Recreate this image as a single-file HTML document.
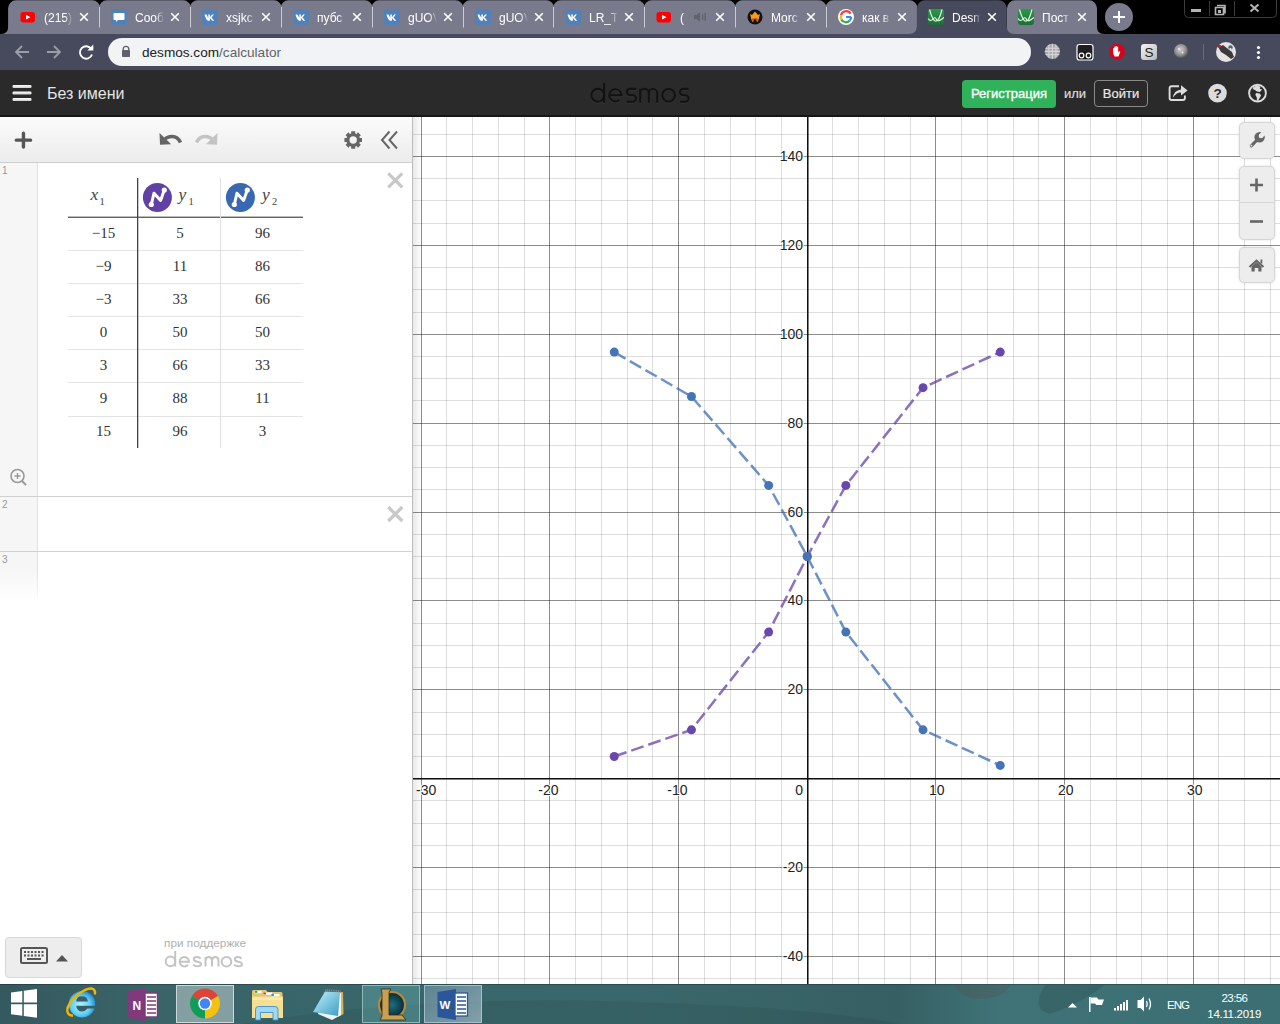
<!DOCTYPE html>
<html><head><meta charset="utf-8">
<style>
*{box-sizing:border-box;margin:0;padding:0}
html,body{width:1280px;height:1024px;overflow:hidden;background:#000;font-family:"Liberation Sans",sans-serif}
.abs{position:absolute}
/* tabs */
#tabbar{position:absolute;left:0;top:0;width:1280px;height:34px;background:#000}
.tab{position:absolute;top:0;height:34px;background:#797b8c;border-radius:8px 8px 0 0}
.tab.active{background:#474a5c}
.tab .fav{position:absolute;left:12px;top:9px;width:16px;height:16px}
.tab .ttl{position:absolute;left:36px;top:9px;font-size:14px;color:#fff;white-space:nowrap;overflow:hidden;width:36px;height:18px;line-height:16px}
.tab .x{position:absolute;left:77px;top:10px;width:14px;height:14px}
.sep{position:absolute;top:10px;width:1px;height:17px;background:#b0b2bf}
/* toolbar */
#toolbar{position:absolute;left:0;top:34px;width:1280px;height:36px;background:#474a5c}
#omni{position:absolute;left:108px;top:4px;width:923px;height:28px;border-radius:14px;background:#f1f3f4}
#omni .url{position:absolute;left:34px;top:7px;font-size:13.6px;color:#202124;letter-spacing:0px}
#omni .url span{color:#5f6368}
/* desmos header */
#dhead{position:absolute;left:0;top:70px;width:1280px;height:47px;background:#2a2a2a;border-bottom:2px solid #161616}
#dhead .title{position:absolute;left:47px;top:15px;font-size:16px;color:#e4e4e4}
.btn-green{position:absolute;left:962px;top:10px;width:94px;height:28px;background:#2fb25a;border-radius:4px;color:#fff;font-size:13px;-webkit-text-stroke:0.35px #fff;text-align:center;line-height:28px}
.ili{position:absolute;left:1064px;top:16px;font-size:13px;color:#ddd;-webkit-text-stroke:0.2px #ddd}
.btn-out{position:absolute;left:1094px;top:10px;width:54px;height:27px;border:1px solid #8a8a8a;border-radius:4px;color:#e8e8e8;font-size:13px;-webkit-text-stroke:0.2px #e8e8e8;text-align:center;line-height:26px}
/* left panel */
#panel{position:absolute;left:0;top:117px;width:413px;height:867px;background:#fff;border-right:1px solid #bdbdbd}
#ptool{position:absolute;left:0;top:0;width:412px;height:46px;background:linear-gradient(#fbfbfb,#ececec);border-bottom:1px solid #cfcfcf}
.gutter{position:absolute;left:0;width:38px;background:#f6f6f6;border-right:1px solid #e2e2e2}
.rownum{position:absolute;left:2px;font-size:10px;color:#999}
.rowline{position:absolute;left:0;width:412px;height:1px;background:#d0d0d0}
#tbl{position:absolute;left:68px;top:61px}
.cell{position:absolute;text-align:center;font-family:"Liberation Serif",serif;font-size:15px;color:#333}
/* graph */
.graph{position:absolute;left:413px;top:117px;background:#fff}
.lab text{font-family:"Liberation Sans",sans-serif;font-size:14px;fill:#222;stroke:#fff;stroke-width:2px;paint-order:stroke;stroke-linejoin:round}
#shadow{position:absolute;left:413px;top:117px;width:9px;height:867px;background:linear-gradient(to right,rgba(0,0,0,0.09),rgba(0,0,0,0))}
.gbtn{position:absolute;left:1238.5px;width:36px;background:#ededed;border:1px solid #d6d6d6;border-radius:5px;box-shadow:0 0 3px rgba(0,0,0,0.12)}
/* taskbar */
#taskbar{position:absolute;left:0;top:984px;width:1280px;height:40px;background:linear-gradient(100deg,#2b4e55 0%,#2f5a5f 30%,#3a6b70 55%,#3d7076 80%,#3b6c72 100%)}
.hl{position:absolute;top:1px;height:38px;border:1px solid rgba(255,255,255,0.55);background:rgba(255,255,255,0.25)}
.tray{position:absolute;color:#fff;font-size:12px}
</style></head><body>

<div id="tabbar"><svg width="1280" height="34" style="position:absolute;left:0;top:0">
<defs><linearGradient id="fade" x1="0" x2="1"><stop offset="0.72" stop-color="#fff" stop-opacity="1"/><stop offset="1" stop-color="#fff" stop-opacity="0"/></linearGradient><mask id="fm"><rect x="0" y="0" width="29" height="34" fill="url(#fade)"/></mask></defs>
<path d="M1.1000000000000014,34 Q8.100000000000001,34 8.100000000000001,27 L8.100000000000001,8.3 A8,8 0 0 1 16.1,0.3 L92.3,0.3 A8,8 0 0 1 100.3,8.3 L100.3,34 Z" fill="#797b8c"/>
<path d="M98.89999999999999,34 L98.89999999999999,8.3 A8,8 0 0 1 106.89999999999999,0.3 L183.1,0.3 A8,8 0 0 1 191.1,8.3 L191.1,34 Z" fill="#797b8c"/>
<path d="M189.70000000000002,34 L189.70000000000002,8.3 A8,8 0 0 1 197.70000000000002,0.3 L273.9,0.3 A8,8 0 0 1 281.9,8.3 L281.9,34 Z" fill="#797b8c"/>
<path d="M280.5,34 L280.5,8.3 A8,8 0 0 1 288.5,0.3 L364.7,0.3 A8,8 0 0 1 372.7,8.3 L372.7,34 Z" fill="#797b8c"/>
<path d="M371.3,34 L371.3,8.3 A8,8 0 0 1 379.3,0.3 L455.5,0.3 A8,8 0 0 1 463.5,8.3 L463.5,34 Z" fill="#797b8c"/>
<path d="M462.1,34 L462.1,8.3 A8,8 0 0 1 470.1,0.3 L546.3,0.3 A8,8 0 0 1 554.3,8.3 L554.3,34 Z" fill="#797b8c"/>
<path d="M552.8999999999999,34 L552.8999999999999,8.3 A8,8 0 0 1 560.8999999999999,0.3 L637.0999999999999,0.3 A8,8 0 0 1 645.0999999999999,8.3 L645.0999999999999,34 Z" fill="#797b8c"/>
<path d="M643.6999999999999,34 L643.6999999999999,8.3 A8,8 0 0 1 651.6999999999999,0.3 L727.9,0.3 A8,8 0 0 1 735.9,8.3 L735.9,34 Z" fill="#797b8c"/>
<path d="M734.4999999999999,34 L734.4999999999999,8.3 A8,8 0 0 1 742.4999999999999,0.3 L818.6999999999999,0.3 A8,8 0 0 1 826.6999999999999,8.3 L826.6999999999999,34 Z" fill="#797b8c"/>
<path d="M825.2999999999998,34 L825.2999999999998,8.3 A8,8 0 0 1 833.2999999999998,0.3 L909.4999999999999,0.3 A8,8 0 0 1 917.4999999999999,8.3 L917.4999999999999,34 Z" fill="#797b8c"/>
<path d="M1007.0,34 L1007.0,8.3 A8,8 0 0 1 1015.0,0.3 L1089,0.3 A8,8 0 0 1 1097,8.3 L1097,27 Q1097,34 1104,34 Z" fill="#797b8c"/>
<path d="M908.8,34 Q916.8,34 916.8,26 L916.8,8.3 A8,8 0 0 1 924.8,0.3 L998.8,0.3 A8,8 0 0 1 1006.8,8.3 L1006.8,26 Q1006.8,34 1014.8,34 Z" fill="#474a5c"/>
<rect x="99" y="7" width="1" height="20.5" fill="#c9cad3"/>
<rect x="190" y="7" width="1" height="20.5" fill="#c9cad3"/>
<rect x="281" y="7" width="1" height="20.5" fill="#c9cad3"/>
<rect x="372" y="7" width="1" height="20.5" fill="#c9cad3"/>
<rect x="463" y="7" width="1" height="20.5" fill="#c9cad3"/>
<rect x="553" y="7" width="1" height="20.5" fill="#c9cad3"/>
<rect x="644" y="7" width="1" height="20.5" fill="#c9cad3"/>
<rect x="735" y="7" width="1" height="20.5" fill="#c9cad3"/>
<rect x="826" y="7" width="1" height="20.5" fill="#c9cad3"/>
<g><rect x="20.5" y="12" width="14.5" height="10.5" rx="3" fill="#ff0000"/><path d="M26,14.8 L30.5,17.2 L26,19.6 Z" fill="#fff"/></g>
<svg x="44" y="0" width="29" height="34" overflow="hidden"><g mask="url(#fm)"><text x="0" y="21.5" font-family="Liberation Sans" font-size="12" fill="#fff">(215)</text></g></svg>
<path d="M80.2,13.2 L87.8,20.8 M87.8,13.2 L80.2,20.8" stroke="#fff" stroke-width="1.6"/>
<g><rect x="111" y="9" width="16" height="16" rx="3" fill="#5181b8"/><path d="M114.5,13 h9 q1,0 1,1 v5 q0,1 -1,1 h-5.5 l-2,2 v-2 h-1.5 q-1,0 -1,-1 v-5 q0,-1 1,-1 Z" fill="#fff"/></g>
<svg x="135" y="0" width="29" height="34" overflow="hidden"><g mask="url(#fm)"><text x="0" y="21.5" font-family="Liberation Sans" font-size="12" fill="#fff">Сооб</text></g></svg>
<path d="M171.2,13.2 L178.8,20.8 M178.8,13.2 L171.2,20.8" stroke="#fff" stroke-width="1.6"/>
<g><rect x="202" y="9" width="16" height="16" rx="3" fill="#5181b8"/><path d="M204.5,14.5 h2 l1.8,3.6 v-3.6 h1.6 v2.8 l2.2,-2.8 h1.8 l-2.4,3 2.8,3.2 h-2 l-2.4,-2.6 v2.6 h-1.6 Q206,20.5 204.5,14.5 Z" fill="#fff"/></g>
<svg x="226" y="0" width="29" height="34" overflow="hidden"><g mask="url(#fm)"><text x="0" y="21.5" font-family="Liberation Sans" font-size="12" fill="#fff">xsjkc</text></g></svg>
<path d="M262.2,13.2 L269.8,20.8 M269.8,13.2 L262.2,20.8" stroke="#fff" stroke-width="1.6"/>
<g><rect x="293" y="9" width="16" height="16" rx="3" fill="#5181b8"/><path d="M295.5,14.5 h2 l1.8,3.6 v-3.6 h1.6 v2.8 l2.2,-2.8 h1.8 l-2.4,3 2.8,3.2 h-2 l-2.4,-2.6 v2.6 h-1.6 Q297,20.5 295.5,14.5 Z" fill="#fff"/></g>
<svg x="317" y="0" width="29" height="34" overflow="hidden"><g mask="url(#fm)"><text x="0" y="21.5" font-family="Liberation Sans" font-size="12" fill="#fff">пубс</text></g></svg>
<path d="M353.2,13.2 L360.8,20.8 M360.8,13.2 L353.2,20.8" stroke="#fff" stroke-width="1.6"/>
<g><rect x="384" y="9" width="16" height="16" rx="3" fill="#5181b8"/><path d="M386.5,14.5 h2 l1.8,3.6 v-3.6 h1.6 v2.8 l2.2,-2.8 h1.8 l-2.4,3 2.8,3.2 h-2 l-2.4,-2.6 v2.6 h-1.6 Q388,20.5 386.5,14.5 Z" fill="#fff"/></g>
<svg x="408" y="0" width="29" height="34" overflow="hidden"><g mask="url(#fm)"><text x="0" y="21.5" font-family="Liberation Sans" font-size="12" fill="#fff">gUOV</text></g></svg>
<path d="M444.2,13.2 L451.8,20.8 M451.8,13.2 L444.2,20.8" stroke="#fff" stroke-width="1.6"/>
<g><rect x="475" y="9" width="16" height="16" rx="3" fill="#5181b8"/><path d="M477.5,14.5 h2 l1.8,3.6 v-3.6 h1.6 v2.8 l2.2,-2.8 h1.8 l-2.4,3 2.8,3.2 h-2 l-2.4,-2.6 v2.6 h-1.6 Q479,20.5 477.5,14.5 Z" fill="#fff"/></g>
<svg x="499" y="0" width="29" height="34" overflow="hidden"><g mask="url(#fm)"><text x="0" y="21.5" font-family="Liberation Sans" font-size="12" fill="#fff">gUOV</text></g></svg>
<path d="M535.2,13.2 L542.8,20.8 M542.8,13.2 L535.2,20.8" stroke="#fff" stroke-width="1.6"/>
<g><rect x="565" y="9" width="16" height="16" rx="3" fill="#5181b8"/><path d="M567.5,14.5 h2 l1.8,3.6 v-3.6 h1.6 v2.8 l2.2,-2.8 h1.8 l-2.4,3 2.8,3.2 h-2 l-2.4,-2.6 v2.6 h-1.6 Q569,20.5 567.5,14.5 Z" fill="#fff"/></g>
<svg x="589" y="0" width="29" height="34" overflow="hidden"><g mask="url(#fm)"><text x="0" y="21.5" font-family="Liberation Sans" font-size="12" fill="#fff">LR_T3</text></g></svg>
<path d="M625.2,13.2 L632.8,20.8 M632.8,13.2 L625.2,20.8" stroke="#fff" stroke-width="1.6"/>
<g><rect x="656.5" y="12" width="14.5" height="10.5" rx="3" fill="#ff0000"/><path d="M662,14.8 L666.5,17.2 L662,19.6 Z" fill="#fff"/></g>
<svg x="680" y="0" width="29" height="34" overflow="hidden"><g mask="url(#fm)"><text x="0" y="21.5" font-family="Liberation Sans" font-size="12" fill="#fff">(</text></g></svg>
<path d="M716.2,13.2 L723.8,20.8 M723.8,13.2 L716.2,20.8" stroke="#fff" stroke-width="1.6"/>
<g><circle cx="755" cy="17" r="7.5" fill="#111"/><path d="M755,11.5 L758,15 L760,14 L758.5,20 L757,22.5 L756,18 L755,20 L754,18 L753,22.5 L751.5,20 L750,14 L752,15 Z" fill="#f59b1a"/><path d="M752,19 L753,22.5 L754,18 Z M758,19 L757,22.5 L756,18 Z" fill="#e0401a"/></g>
<svg x="771" y="0" width="29" height="34" overflow="hidden"><g mask="url(#fm)"><text x="0" y="21.5" font-family="Liberation Sans" font-size="12" fill="#fff">Morc</text></g></svg>
<path d="M807.2,13.2 L814.8,20.8 M814.8,13.2 L807.2,20.8" stroke="#fff" stroke-width="1.6"/>
<g><circle cx="846" cy="17" r="8" fill="#fff"/><path d="M850.6,13.8 A5.2,5.2 0 0 0 841,15.4" stroke="#ea4335" stroke-width="2.2" fill="none"/><path d="M841,15.4 A5.2,5.2 0 0 0 841.4,19.6" stroke="#fbbc05" stroke-width="2.2" fill="none"/><path d="M841.4,19.6 A5.2,5.2 0 0 0 849.8,20.6" stroke="#34a853" stroke-width="2.2" fill="none"/><path d="M849.8,20.6 A5.2,5.2 0 0 0 851.2,17" stroke="#4285f4" stroke-width="2.2" fill="none"/><rect x="846" y="16" width="5.2" height="2.1" fill="#4285f4"/></g>
<svg x="862" y="0" width="29" height="34" overflow="hidden"><g mask="url(#fm)"><text x="0" y="21.5" font-family="Liberation Sans" font-size="12" fill="#fff">как в</text></g></svg>
<path d="M898.2,13.2 L905.8,20.8 M905.8,13.2 L898.2,20.8" stroke="#fff" stroke-width="1.6"/>
<g><defs><linearGradient id="dg928" x1="0" y1="0" x2="0" y2="1"><stop offset="0" stop-color="#2a9a4a"/><stop offset="1" stop-color="#1d6f34"/></linearGradient></defs><rect x="928" y="9" width="16" height="16" rx="3" fill="url(#dg928)"/><g transform="translate(928,9)" fill="none" stroke="#e8f5ea" stroke-width="1.15"><path d="M1.5,0.5 Q8,24 14,0.5"/><path d="M0.2,9.6 C1.5,12.2 3.5,11.8 5,10 C6.5,8 7.5,8.5 8.8,11 C10,12.8 13,11 15.8,8.5"/></g></g>
<svg x="952" y="0" width="29" height="34" overflow="hidden"><g mask="url(#fm)"><text x="0" y="21.5" font-family="Liberation Sans" font-size="12" fill="#fff">Desm</text></g></svg>
<path d="M988.2,13.2 L995.8,20.8 M995.8,13.2 L988.2,20.8" stroke="#fff" stroke-width="1.6"/>
<g><defs><linearGradient id="dg1018" x1="0" y1="0" x2="0" y2="1"><stop offset="0" stop-color="#2a9a4a"/><stop offset="1" stop-color="#1d6f34"/></linearGradient></defs><rect x="1018" y="9" width="16" height="16" rx="3" fill="url(#dg1018)"/><g transform="translate(1018,9)" fill="none" stroke="#e8f5ea" stroke-width="1.15"><path d="M1.5,0.5 Q8,24 14,0.5"/><path d="M0.2,9.6 C1.5,12.2 3.5,11.8 5,10 C6.5,8 7.5,8.5 8.8,11 C10,12.8 13,11 15.8,8.5"/></g></g>
<svg x="1042" y="0" width="29" height="34" overflow="hidden"><g mask="url(#fm)"><text x="0" y="21.5" font-family="Liberation Sans" font-size="12" fill="#fff">Пост</text></g></svg>
<path d="M1078.2,13.2 L1085.8,20.8 M1085.8,13.2 L1078.2,20.8" stroke="#fff" stroke-width="1.6"/>
<path d="M694,15 h2.5 l3.5,-3 v10 l-3.5,-3 h-2.5 Z" fill="#60636e"/>
<rect x="702" y="14" width="1.3" height="6" fill="#60636e"/><rect x="704.5" y="13" width="1.3" height="8" fill="#60636e"/>
<circle cx="1119" cy="17" r="14" fill="#797b8c"/><path d="M1113,17 h12 M1119,11 v12" stroke="#fff" stroke-width="2"/>
<path d="M1184.5,0 V13.5 Q1184.5,17.5 1188.5,17.5 H1272.5 Q1276.5,17.5 1276.5,13.5 V0" fill="none" stroke="#3c3c3c" stroke-width="1"/>
<rect x="1209" y="1" width="1" height="15" fill="#3c3c3c"/><rect x="1234" y="1" width="1" height="15" fill="#3c3c3c"/>
<rect x="1191" y="9" width="10" height="3" fill="#b4b4b4"/>
<path d="M1217,5.5 h8 v8 M1215.5,7.5 h8 v7 h-8 Z" fill="none" stroke="#b4b4b4" stroke-width="1.6"/><rect x="1218" y="10" width="3" height="3" fill="#b4b4b4"/>
<path d="M1250.5,4.5 L1258.5,11.5 M1258.5,4.5 L1250.5,11.5" stroke="#b4b4b4" stroke-width="2"/>
</svg>
</div>

<div id="toolbar">
  <svg width="1280" height="36" style="position:absolute;left:0;top:0">
    <!-- back -->
    <path d="M29,18 H16.5 M22,12 L16,18 L22,24" stroke="#9b9da9" stroke-width="1.8" fill="none"/>
    <!-- forward -->
    <path d="M47,18 H59.5 M54,12 L60,18 L54,24" stroke="#9b9da9" stroke-width="1.8" fill="none"/>
    <!-- reload -->
    <path d="M91.3,15 A6.2,6.2 0 1 0 92,20.5" stroke="#fff" stroke-width="1.9" fill="none"/>
    <path d="M93.3,10.5 V16.5 H87.3 Z" fill="#fff"/>
    <!-- star -->
    <path d="M1013,12.5 L1014.9,16.8 L1019.5,17.2 L1016,20.2 L1017.1,24.7 L1013,22.3 L1008.9,24.7 L1010,20.2 L1006.5,17.2 L1011.1,16.8 Z" fill="none" stroke="#5f6368" stroke-width="1.5" stroke-linejoin="round"/>
    <!-- globe ext -->
    <defs><clipPath id="gclip"><circle cx="1052.4" cy="17.4" r="7.6"/></clipPath></defs>
    <circle cx="1052.4" cy="17.4" r="7.6" fill="#a9a9ad"/>
    <g clip-path="url(#gclip)"><path d="M1048.9,9 V26 M1052.4,9 V26 M1055.9,9 V26 M1044,14.2 H1061 M1044,17.4 H1061 M1044,20.6 H1061" stroke="#d6d6d8" stroke-width="1.1"/></g>
    <!-- oo ext -->
    <rect x="1077" y="10.5" width="16" height="15.5" rx="2.5" fill="#1e1e1e" stroke="#fff" stroke-width="1.2"/>
    <circle cx="1081.5" cy="21.5" r="2.3" fill="none" stroke="#fff" stroke-width="1.2"/>
    <circle cx="1088.5" cy="21.5" r="2.3" fill="none" stroke="#fff" stroke-width="1.2"/>
    <!-- adblock -->
    <path d="M1114,10 h6 l4.5,4.5 v6.5 l-4.5,4.5 h-6 l-4.5,-4.5 v-6.5 Z" fill="#d9001b"/>
    <path d="M1114.5,22.5 Q1113,20 1113,17.5 V14.5 q0.8,-0.8 1.3,0 V17 V12.8 q0.8,-0.8 1.3,0 V17 V12.3 q0.8,-0.8 1.3,0 V17 V13 q0.8,-0.8 1.3,0 V18.5 l1.2,-1.3 q0.9,-0.3 0.9,0.6 L1118.5,22.5 Z" fill="#fff"/>
    <!-- S ext -->
    <defs><linearGradient id="sg" x1="0" x2="1" y1="0" y2="1"><stop offset="0" stop-color="#f4f4f4"/><stop offset="1" stop-color="#b8b8b8"/></linearGradient></defs>
    <rect x="1141" y="10" width="16" height="16" rx="3" fill="url(#sg)"/>
    <text x="1149" y="23" text-anchor="middle" font-family="Liberation Sans" font-size="13.5" fill="#222">S</text>
    <!-- disc -->
    <defs><radialGradient id="dsc" cx="0.45" cy="0.4" r="0.6"><stop offset="0" stop-color="#d0d0d0"/><stop offset="0.7" stop-color="#8a8a8a"/><stop offset="1" stop-color="#555"/></radialGradient></defs>
    <circle cx="1181" cy="17" r="7" fill="url(#dsc)"/>
    <circle cx="1179" cy="15" r="1" fill="#eee"/><circle cx="1182.5" cy="18.5" r="0.9" fill="#eee"/>
    <rect x="1203" y="10" width="1" height="16" fill="#6a6d7e"/>
    <!-- avatar -->
    <circle cx="1226" cy="18" r="10" fill="#e6e4e2"/>
    <path d="M1218.5,13.5 L1223,11 L1228,15 L1232,18 L1234,23 L1231,25 L1226,21 L1221,18 Z" fill="#3c3a3a"/>
    <circle cx="1219.5" cy="12.5" r="1.8" fill="#b3202a"/>
    <circle cx="1230.5" cy="13.5" r="2.2" fill="#3e6c78"/><circle cx="1230.5" cy="15" r="1" fill="#fff"/>
    <!-- menu -->
    <circle cx="1258.5" cy="13.5" r="1.6" fill="#fff"/><circle cx="1258.5" cy="18.5" r="1.6" fill="#fff"/><circle cx="1258.5" cy="23.5" r="1.6" fill="#fff"/>
  </svg>
  <div id="omni">
    <svg width="30" height="28" style="position:absolute;left:0;top:0"><path d="M15.2,12.5 V11.2 A2.8,2.8 0 0 1 20.8,11.2 V12.5" stroke="#5f6368" stroke-width="1.4" fill="none"/><rect x="14" y="12" width="8" height="7" rx="0.8" fill="#5f6368"/></svg>
    <div class="url">desmos.com<span>/calculator</span></div>
  </div>
</div>

<div id="dhead">
  <svg width="1280" height="47" style="position:absolute;left:0;top:0">
    <defs><linearGradient id="hb" x1="0" x2="0" y1="0" y2="1"><stop offset="0" stop-color="#fff"/><stop offset="1" stop-color="#cfcfcf"/></linearGradient></defs>
    <rect x="12.5" y="15" width="19" height="3" rx="1.2" fill="url(#hb)"/>
    <rect x="12.5" y="21.5" width="19" height="3" rx="1.2" fill="url(#hb)"/>
    <rect x="12.5" y="28" width="19" height="3" rx="1.2" fill="url(#hb)"/>
    <!-- desmos logo -->
    <g fill="none" stroke="#363636" stroke-width="2.1" transform="translate(0,0.8)">
      <path d="M604.1,12.9 V32.8"/><circle cx="597.8" cy="25.3" r="6.45"/>
      <path d="M609.25,25.3 H621.45 A6.1,6.1 0 1 0 619.3,30.0"/>
      <path d="M635.9,18.85 H630.1 A3.225,3.225 0 0 0 630.1,25.3 H632.7 A3.225,3.225 0 0 1 632.7,31.75 H626.9"/>
      <path d="M640.2,32.8 V18.85 M640.2,23.15 A4.3,4.3 0 0 1 648.8,23.15 V32.8 M648.8,23.15 A4.2,4.2 0 0 1 657.2,23.15 V32.8"/>
      <circle cx="668.6" cy="25.3" r="6.35"/>
      <path d="M688.55,18.85 H683.2 A3.225,3.225 0 0 0 683.2,25.3 H685.3 A3.225,3.225 0 0 1 685.3,31.75 H680.05"/>
    </g>
    <g fill="none" stroke="#121212" stroke-width="2.1">
      <path d="M604.1,12.9 V32.8"/><circle cx="597.8" cy="25.3" r="6.45"/>
      <path d="M609.25,25.3 H621.45 A6.1,6.1 0 1 0 619.3,30.0"/>
      <path d="M635.9,18.85 H630.1 A3.225,3.225 0 0 0 630.1,25.3 H632.7 A3.225,3.225 0 0 1 632.7,31.75 H626.9"/>
      <path d="M640.2,32.8 V18.85 M640.2,23.15 A4.3,4.3 0 0 1 648.8,23.15 V32.8 M648.8,23.15 A4.2,4.2 0 0 1 657.2,23.15 V32.8"/>
      <circle cx="668.6" cy="25.3" r="6.35"/>
      <path d="M688.55,18.85 H683.2 A3.225,3.225 0 0 0 683.2,25.3 H685.3 A3.225,3.225 0 0 1 685.3,31.75 H680.05"/>
    </g>
    <!-- share -->
    <path d="M1179,16.2 H1171.6 Q1169.6,16.2 1169.6,18.2 V28 Q1169.6,30 1171.6,30 H1182.9 Q1184.9,30 1184.9,28 V25.5" stroke="#dcdcdc" stroke-width="1.9" fill="none"/>
    <path d="M1173,27.8 Q1173.5,20.5 1181,19.5 V15.3 L1187.6,20.6 L1181,25.6 V22.6 Q1176,22.6 1173,27.8 Z" fill="#dcdcdc"/>
    <!-- help -->
    <circle cx="1217.5" cy="23.1" r="9.3" fill="#dcdcdc"/>
    <text x="1217.5" y="28.2" text-anchor="middle" font-family="Liberation Sans" font-weight="bold" font-size="13.5" fill="#2a2a2a">?</text>
    <!-- globe -->
    <circle cx="1257.5" cy="23.1" r="8.4" fill="none" stroke="#dcdcdc" stroke-width="1.9"/>
    <path d="M1253.5,16.8 L1257.5,15.5 L1260.5,16.8 L1259.8,18.7 L1262.1,19.5 L1259.9,21.9 L1256.9,21.5 L1254.9,19.9 L1252.7,18.9 Z M1256.1,23.1 L1259.7,23.5 L1261.1,25.5 L1259.7,27.9 L1258.1,30.7 L1257.1,31.3 L1256.7,27.3 L1255.3,24.7 Z" fill="#dcdcdc"/>
  </svg>
  <div class="title">Без имени</div>
  <div class="btn-green">Регистрация</div>
  <div class="ili">или</div>
  <div class="btn-out">Войти</div>
</div>

<svg class="graph" width="867" height="867" viewBox="0 0 867 867">
<g shape-rendering="crispEdges"><rect x="33" y="0" width="1" height="867" fill="rgba(0,0,0,0.13)"/>
<rect x="59" y="0" width="1" height="867" fill="rgba(0,0,0,0.13)"/>
<rect x="85" y="0" width="1" height="867" fill="rgba(0,0,0,0.13)"/>
<rect x="111" y="0" width="1" height="867" fill="rgba(0,0,0,0.13)"/>
<rect x="162" y="0" width="1" height="867" fill="rgba(0,0,0,0.13)"/>
<rect x="188" y="0" width="1" height="867" fill="rgba(0,0,0,0.13)"/>
<rect x="214" y="0" width="1" height="867" fill="rgba(0,0,0,0.13)"/>
<rect x="239" y="0" width="1" height="867" fill="rgba(0,0,0,0.13)"/>
<rect x="291" y="0" width="1" height="867" fill="rgba(0,0,0,0.13)"/>
<rect x="317" y="0" width="1" height="867" fill="rgba(0,0,0,0.13)"/>
<rect x="342" y="0" width="1" height="867" fill="rgba(0,0,0,0.13)"/>
<rect x="368" y="0" width="1" height="867" fill="rgba(0,0,0,0.13)"/>
<rect x="419" y="0" width="1" height="867" fill="rgba(0,0,0,0.13)"/>
<rect x="445" y="0" width="1" height="867" fill="rgba(0,0,0,0.13)"/>
<rect x="471" y="0" width="1" height="867" fill="rgba(0,0,0,0.13)"/>
<rect x="497" y="0" width="1" height="867" fill="rgba(0,0,0,0.13)"/>
<rect x="548" y="0" width="1" height="867" fill="rgba(0,0,0,0.13)"/>
<rect x="574" y="0" width="1" height="867" fill="rgba(0,0,0,0.13)"/>
<rect x="600" y="0" width="1" height="867" fill="rgba(0,0,0,0.13)"/>
<rect x="625" y="0" width="1" height="867" fill="rgba(0,0,0,0.13)"/>
<rect x="677" y="0" width="1" height="867" fill="rgba(0,0,0,0.13)"/>
<rect x="703" y="0" width="1" height="867" fill="rgba(0,0,0,0.13)"/>
<rect x="728" y="0" width="1" height="867" fill="rgba(0,0,0,0.13)"/>
<rect x="754" y="0" width="1" height="867" fill="rgba(0,0,0,0.13)"/>
<rect x="805" y="0" width="1" height="867" fill="rgba(0,0,0,0.13)"/>
<rect x="831" y="0" width="1" height="867" fill="rgba(0,0,0,0.13)"/>
<rect x="857" y="0" width="1" height="867" fill="rgba(0,0,0,0.13)"/>
<rect x="0" y="861" width="867" height="1" fill="rgba(0,0,0,0.13)"/>
<rect x="0" y="817" width="867" height="1" fill="rgba(0,0,0,0.13)"/>
<rect x="0" y="795" width="867" height="1" fill="rgba(0,0,0,0.13)"/>
<rect x="0" y="772" width="867" height="1" fill="rgba(0,0,0,0.13)"/>
<rect x="0" y="728" width="867" height="1" fill="rgba(0,0,0,0.13)"/>
<rect x="0" y="706" width="867" height="1" fill="rgba(0,0,0,0.13)"/>
<rect x="0" y="683" width="867" height="1" fill="rgba(0,0,0,0.13)"/>
<rect x="0" y="639" width="867" height="1" fill="rgba(0,0,0,0.13)"/>
<rect x="0" y="617" width="867" height="1" fill="rgba(0,0,0,0.13)"/>
<rect x="0" y="595" width="867" height="1" fill="rgba(0,0,0,0.13)"/>
<rect x="0" y="550" width="867" height="1" fill="rgba(0,0,0,0.13)"/>
<rect x="0" y="528" width="867" height="1" fill="rgba(0,0,0,0.13)"/>
<rect x="0" y="506" width="867" height="1" fill="rgba(0,0,0,0.13)"/>
<rect x="0" y="461" width="867" height="1" fill="rgba(0,0,0,0.13)"/>
<rect x="0" y="439" width="867" height="1" fill="rgba(0,0,0,0.13)"/>
<rect x="0" y="417" width="867" height="1" fill="rgba(0,0,0,0.13)"/>
<rect x="0" y="372" width="867" height="1" fill="rgba(0,0,0,0.13)"/>
<rect x="0" y="350" width="867" height="1" fill="rgba(0,0,0,0.13)"/>
<rect x="0" y="328" width="867" height="1" fill="rgba(0,0,0,0.13)"/>
<rect x="0" y="283" width="867" height="1" fill="rgba(0,0,0,0.13)"/>
<rect x="0" y="261" width="867" height="1" fill="rgba(0,0,0,0.13)"/>
<rect x="0" y="239" width="867" height="1" fill="rgba(0,0,0,0.13)"/>
<rect x="0" y="195" width="867" height="1" fill="rgba(0,0,0,0.13)"/>
<rect x="0" y="172" width="867" height="1" fill="rgba(0,0,0,0.13)"/>
<rect x="0" y="150" width="867" height="1" fill="rgba(0,0,0,0.13)"/>
<rect x="0" y="106" width="867" height="1" fill="rgba(0,0,0,0.13)"/>
<rect x="0" y="83" width="867" height="1" fill="rgba(0,0,0,0.13)"/>
<rect x="0" y="61" width="867" height="1" fill="rgba(0,0,0,0.13)"/>
<rect x="0" y="17" width="867" height="1" fill="rgba(0,0,0,0.13)"/>
<rect x="8" y="0" width="1" height="867" fill="rgba(0,0,0,0.45)"/>
<rect x="136" y="0" width="1" height="867" fill="rgba(0,0,0,0.45)"/>
<rect x="265" y="0" width="1" height="867" fill="rgba(0,0,0,0.45)"/>
<rect x="522" y="0" width="1" height="867" fill="rgba(0,0,0,0.45)"/>
<rect x="651" y="0" width="1" height="867" fill="rgba(0,0,0,0.45)"/>
<rect x="780" y="0" width="1" height="867" fill="rgba(0,0,0,0.45)"/>
<rect x="0" y="839" width="867" height="1" fill="rgba(0,0,0,0.45)"/>
<rect x="0" y="750" width="867" height="1" fill="rgba(0,0,0,0.45)"/>
<rect x="0" y="572" width="867" height="1" fill="rgba(0,0,0,0.45)"/>
<rect x="0" y="483" width="867" height="1" fill="rgba(0,0,0,0.45)"/>
<rect x="0" y="395" width="867" height="1" fill="rgba(0,0,0,0.45)"/>
<rect x="0" y="306" width="867" height="1" fill="rgba(0,0,0,0.45)"/>
<rect x="0" y="217" width="867" height="1" fill="rgba(0,0,0,0.45)"/>
<rect x="0" y="128" width="867" height="1" fill="rgba(0,0,0,0.45)"/>
<rect x="0" y="39" width="867" height="1" fill="rgba(0,0,0,0.45)"/>
<rect x="394" y="0" width="1" height="867" fill="#111"/>
<rect x="395" y="0" width="1" height="867" fill="rgba(0,0,0,0.5)"/>
<rect x="0" y="661" width="867" height="1" fill="#111"/>
<rect x="0" y="662" width="867" height="1" fill="rgba(0,0,0,0.5)"/></g>
<g class="lab"><text x="3" y="678" text-anchor="start">-30</text>
<text x="145.5" y="678" text-anchor="end">-20</text>
<text x="274.5" y="678" text-anchor="end">-10</text>
<text x="523.8" y="678" text-anchor="middle">10</text>
<text x="652.8" y="678" text-anchor="middle">20</text>
<text x="781.8" y="678" text-anchor="middle">30</text>
<text x="390" y="678" text-anchor="end">0</text>
<text x="390" y="844.0" text-anchor="end">-40</text>
<text x="390" y="755.0" text-anchor="end">-20</text>
<text x="390" y="577.0" text-anchor="end">20</text>
<text x="390" y="488.0" text-anchor="end">40</text>
<text x="390" y="400.0" text-anchor="end">60</text>
<text x="390" y="311.0" text-anchor="end">80</text>
<text x="390" y="222.0" text-anchor="end">100</text>
<text x="390" y="133.0" text-anchor="end">120</text>
<text x="390" y="44.0" text-anchor="end">140</text></g>
<path d="M201.25,639.53 L278.45,612.86 L355.65,515.08 L394.25,439.53 L432.85,368.42 L510.05,270.64 L587.25,235.08" fill="none" stroke="rgba(100,66,170,0.75)" stroke-width="2.5" stroke-dasharray="13 5" stroke-linejoin="round"/><circle cx="201.25" cy="639.53" r="4.5" fill="#6a47ad"/><circle cx="278.45" cy="612.86" r="4.5" fill="#6a47ad"/><circle cx="355.65" cy="515.08" r="4.5" fill="#6a47ad"/><circle cx="394.25" cy="439.53" r="4.5" fill="#6a47ad"/><circle cx="432.85" cy="368.42" r="4.5" fill="#6a47ad"/><circle cx="510.05" cy="270.64" r="4.5" fill="#6a47ad"/><circle cx="587.25" cy="235.08" r="4.5" fill="#6a47ad"/><path d="M201.25,235.08 L278.45,279.53 L355.65,368.42 L394.25,439.53 L432.85,515.08 L510.05,612.86 L587.25,648.42" fill="none" stroke="rgba(60,110,180,0.75)" stroke-width="2.5" stroke-dasharray="13 5" stroke-linejoin="round"/><circle cx="201.25" cy="235.08" r="4.5" fill="#4474b8"/><circle cx="278.45" cy="279.53" r="4.5" fill="#4474b8"/><circle cx="355.65" cy="368.42" r="4.5" fill="#4474b8"/><circle cx="394.25" cy="439.53" r="4.5" fill="#4474b8"/><circle cx="432.85" cy="515.08" r="4.5" fill="#4474b8"/><circle cx="510.05" cy="612.86" r="4.5" fill="#4474b8"/><circle cx="587.25" cy="648.42" r="4.5" fill="#4474b8"/>
</svg>
<div id="shadow"></div>

<div id="panel">
  <div id="ptool">
    <svg width="412" height="46" style="position:absolute;left:0;top:0">
      <path d="M23.45,16.2 V30.1 M16.3,23.15 H30.6" stroke="#555" stroke-width="3.4" stroke-linecap="round"/>
      <!-- undo -->
      <path d="M180.5,25.5 Q177,18 169.5,19.8 Q166.5,20.5 164.5,22.5" stroke="#666" stroke-width="3.6" fill="none"/>
      <path d="M159.5,16 L160,27.8 L171.2,27.2 Z" fill="#666"/>
      <!-- redo -->
      <path d="M196.5,25.5 Q200,18 207.5,19.8 Q210.5,20.5 212.5,22.5" stroke="#c4c4c4" stroke-width="3.6" fill="none"/>
      <path d="M217.5,16 L217,27.8 L205.8,27.2 Z" fill="#c4c4c4"/>
      <!-- gear -->
      <g transform="translate(353.2,23)" fill="#666"><path d="M-2.02,-6.60 L-2.02,-8.77 L2.02,-8.77 L2.02,-6.60 L3.24,-6.09 L4.77,-7.63 L7.63,-4.77 L6.09,-3.24 L6.60,-2.02 L8.77,-2.02 L8.77,2.02 L6.60,2.02 L6.09,3.24 L7.63,4.77 L4.77,7.63 L3.24,6.09 L2.02,6.60 L2.02,8.77 L-2.02,8.77 L-2.02,6.60 L-3.24,6.09 L-4.77,7.63 L-7.63,4.77 L-6.09,3.24 L-6.60,2.02 L-8.77,2.02 L-8.77,-2.02 L-6.60,-2.02 L-6.09,-3.24 L-7.63,-4.77 L-4.77,-7.63 L-3.24,-6.09 Z M3.7,0 A3.7,3.7 0 1 0 -3.7,0 A3.7,3.7 0 1 0 3.7,0 Z" fill-rule="evenodd"/></g>
      <!-- chevrons -->
      <path d="M389.5,14.5 L382,23 L389.5,31.5 M397,14.5 L389.5,23 L397,31.5" stroke="#666" stroke-width="2" fill="none"/>
    </svg>
  </div>
  <div class="gutter" style="top:46px;height:335px"></div>
  <div class="rowline" style="top:379px"></div>
  <div class="gutter" style="top:380px;height:55px"></div>
  <div class="rowline" style="top:434px"></div>
  <div class="gutter" style="top:435px;height:50px;background:linear-gradient(#f6f6f6 35%,#fff);border-right-color:transparent"></div><div style="position:absolute;left:37px;top:435px;width:1px;height:50px;background:linear-gradient(#e2e2e2 40%,#fff)"></div>
  <div class="rownum" style="top:48px">1</div>
  <svg width="412" height="360" style="position:absolute;left:0;top:46px">
    <!-- close x -->
    <path d="M388.3,10.3 L402.3,24.3 M402.3,10.3 L388.3,24.3" stroke="#c8c8c8" stroke-width="3.2"/>
    <path d="M388.3,344 L402.3,358 M402.3,344 L388.3,358" stroke="#c8c8c8" stroke-width="3.2"/>
    <!-- zoom icon -->
    <circle cx="17.5" cy="313" r="6.5" fill="none" stroke="#999" stroke-width="1.6"/>
    <path d="M22,318 L26,322" stroke="#999" stroke-width="2"/>
    <path d="M14.5,313 H20.5 M17.5,310 V316" stroke="#999" stroke-width="1.4"/>
  </svg>
  <svg width="412" height="400" style="position:absolute;left:0;top:0">
<rect x="68" y="99.6" width="235" height="1.3" fill="#555"/>
<rect x="68" y="133" width="235" height="1" fill="#e4e4e4"/>
<rect x="68" y="166" width="235" height="1" fill="#e4e4e4"/>
<rect x="68" y="199" width="235" height="1" fill="#e4e4e4"/>
<rect x="68" y="232" width="235" height="1" fill="#e4e4e4"/>
<rect x="68" y="265" width="235" height="1" fill="#e4e4e4"/>
<rect x="68" y="299" width="235" height="1" fill="#e4e4e4"/>
<rect x="137" y="61" width="1.3" height="270" fill="#444"/>
<rect x="220" y="61" width="1" height="270" fill="#e0e0e0"/>
<circle cx="157.4" cy="80.5" r="14.5" fill="#6042a6"/><path d="M151.3,87.5 L154.0,76.2 L160.6,83.5 L164.3,73.1" stroke="#fff" stroke-width="3" fill="none" stroke-linejoin="round"/><circle cx="151.3" cy="87.5" r="2.6" fill="#fff"/><circle cx="164.3" cy="73.1" r="2.6" fill="#fff"/>
<circle cx="240.4" cy="80.5" r="14.5" fill="#3868b2"/><path d="M234.3,87.5 L237.0,76.2 L243.6,83.5 L247.3,73.1" stroke="#fff" stroke-width="3" fill="none" stroke-linejoin="round"/><circle cx="234.3" cy="87.5" r="2.6" fill="#fff"/><circle cx="247.3" cy="73.1" r="2.6" fill="#fff"/>
<text x="90.5" y="83.30000000000001" font-family="Liberation Serif" fill="#444" font-size="17.5" font-style="italic">x</text><text x="99.6" y="88.19999999999999" font-family="Liberation Serif" fill="#444" font-size="10.5">1</text>
<text x="178.5" y="83.30000000000001" font-family="Liberation Serif" fill="#444" font-size="17.5" font-style="italic">y</text><text x="188.5" y="88.19999999999999" font-family="Liberation Serif" fill="#444" font-size="10.5">1</text>
<text x="262" y="83.30000000000001" font-family="Liberation Serif" fill="#444" font-size="17.5" font-style="italic">y</text><text x="272" y="88.19999999999999" font-family="Liberation Serif" fill="#444" font-size="10.5">2</text>
<text x="103.5" y="120.8" font-family="Liberation Serif" fill="#333" font-size="15" text-anchor="middle">−15</text>
<text x="180" y="120.8" font-family="Liberation Serif" fill="#333" font-size="15" text-anchor="middle">5</text>
<text x="262.5" y="120.8" font-family="Liberation Serif" fill="#333" font-size="15" text-anchor="middle">96</text>
<text x="103.5" y="153.8" font-family="Liberation Serif" fill="#333" font-size="15" text-anchor="middle">−9</text>
<text x="180" y="153.8" font-family="Liberation Serif" fill="#333" font-size="15" text-anchor="middle">11</text>
<text x="262.5" y="153.8" font-family="Liberation Serif" fill="#333" font-size="15" text-anchor="middle">86</text>
<text x="103.5" y="186.9" font-family="Liberation Serif" fill="#333" font-size="15" text-anchor="middle">−3</text>
<text x="180" y="186.9" font-family="Liberation Serif" fill="#333" font-size="15" text-anchor="middle">33</text>
<text x="262.5" y="186.9" font-family="Liberation Serif" fill="#333" font-size="15" text-anchor="middle">66</text>
<text x="103.5" y="220.1" font-family="Liberation Serif" fill="#333" font-size="15" text-anchor="middle">0</text>
<text x="180" y="220.1" font-family="Liberation Serif" fill="#333" font-size="15" text-anchor="middle">50</text>
<text x="262.5" y="220.1" font-family="Liberation Serif" fill="#333" font-size="15" text-anchor="middle">50</text>
<text x="103.5" y="253.2" font-family="Liberation Serif" fill="#333" font-size="15" text-anchor="middle">3</text>
<text x="180" y="253.2" font-family="Liberation Serif" fill="#333" font-size="15" text-anchor="middle">66</text>
<text x="262.5" y="253.2" font-family="Liberation Serif" fill="#333" font-size="15" text-anchor="middle">33</text>
<text x="103.5" y="286.2" font-family="Liberation Serif" fill="#333" font-size="15" text-anchor="middle">9</text>
<text x="180" y="286.2" font-family="Liberation Serif" fill="#333" font-size="15" text-anchor="middle">88</text>
<text x="262.5" y="286.2" font-family="Liberation Serif" fill="#333" font-size="15" text-anchor="middle">11</text>
<text x="103.5" y="319.3" font-family="Liberation Serif" fill="#333" font-size="15" text-anchor="middle">15</text>
<text x="180" y="319.3" font-family="Liberation Serif" fill="#333" font-size="15" text-anchor="middle">96</text>
<text x="262.5" y="319.3" font-family="Liberation Serif" fill="#333" font-size="15" text-anchor="middle">3</text>
</svg>
  <div class="rownum" style="top:382px">2</div>
  <div class="rownum" style="top:437px">3</div>
  <!-- keyboard button -->
  <div style="position:absolute;left:5px;top:820px;width:77px;height:41px;background:#ededed;border:1px solid #d8d8d8;border-radius:4px"></div>
  <svg width="90" height="50" style="position:absolute;left:0;top:815px">
    <rect x="21" y="33" width="26" height="15" rx="1.5" fill="none" stroke="#555" stroke-width="2" transform="translate(0,-17)"/>
    <g fill="#555" transform="translate(0,-17)">
      <rect x="24" y="36" width="2" height="2"/><rect x="27.5" y="36" width="2" height="2"/><rect x="31" y="36" width="2" height="2"/><rect x="34.5" y="36" width="2" height="2"/><rect x="38" y="36" width="2" height="2"/><rect x="41.5" y="36" width="2" height="2"/>
      <rect x="24" y="39.5" width="2" height="2"/><rect x="27.5" y="39.5" width="2" height="2"/><rect x="31" y="39.5" width="2" height="2"/><rect x="34.5" y="39.5" width="2" height="2"/><rect x="38" y="39.5" width="2" height="2"/><rect x="41.5" y="39.5" width="2" height="2"/>
      <rect x="27" y="43" width="14" height="2"/>
    </g>
    <path d="M56,29.5 L62,23 L68,29.5 Z" fill="#555"/>
  </svg>
  <div style="position:absolute;left:164px;top:819px;font-size:11.8px;color:#b0b0b0;letter-spacing:0">при поддержке</div>
  <svg width="90" height="22" style="position:absolute;left:160px;top:832px">
    <g fill="none" stroke="#c4c4c4" stroke-width="2">
      <path d="M15.2,2 V17.5"/><circle cx="10.5" cy="12.4" r="4.8"/>
      <path d="M19.8,12.8 H29 A4.7,4.7 0 1 0 28,15.6"/>
      <path d="M40.5,9.8 Q39.5,8 37,8 Q33.8,8 33.8,10.3 Q33.8,12.2 37.3,12.7 Q41,13.2 41,15.3 Q41,17.3 37.3,17.3 Q34.5,17.3 33.2,15.5"/>
      <path d="M45.5,17.5 V8 M45.5,11.5 Q45.5,8 48.8,8 Q52,8 52,11.5 V17.5 M52,11.5 Q52,8 55.3,8 Q58.5,8 58.5,11.5 V17.5"/>
      <circle cx="66.5" cy="12.7" r="4.8"/>
      <path d="M81.5,9.8 Q80.5,8 78,8 Q74.8,8 74.8,10.3 Q74.8,12.2 78.3,12.7 Q82,13.2 82,15.3 Q82,17.3 78.3,17.3 Q75.5,17.3 74.2,15.5"/>
    </g>
  </svg>
</div>

<!-- graph controls -->
<div class="gbtn" style="top:122.3px;height:36.3px"></div>
<div class="gbtn" style="top:166px;height:74px"></div>
<div style="position:absolute;left:1240px;top:202px;width:34px;height:1px;background:#d6d6d6"></div>
<div class="gbtn" style="top:247px;height:36px"></div>
<svg width="50" height="180" style="position:absolute;left:1230px;top:115px">
  <!-- wrench -->
  <path d="M21.3,30.8 L28,24" stroke="#666" stroke-width="3.1" stroke-linecap="round"/>
  <circle cx="29.6" cy="22.3" r="5.2" fill="#666"/>
  <circle cx="31" cy="20.9" r="2.3" fill="#ededed"/>
  <rect x="-2.3" y="-8" width="4.6" height="8" fill="#ededed" transform="translate(31,20.9) rotate(45)"/>
  <circle cx="21.4" cy="30.6" r="0.9" fill="#ededed"/>
  <!-- plus -->
  <path d="M26.5,63.5 V76.5 M20,70 H33" stroke="#666" stroke-width="2.6"/>
  <path d="M20,106.5 H33" stroke="#666" stroke-width="2.6"/>
  <!-- home -->
  <path d="M19.5,152 L26.5,145.5 L33.5,152" stroke="#666" stroke-width="2" fill="none"/>
  <path d="M21.5,151.5 L26.5,147 L31.5,151.5 V156.5 H28.3 V153 H24.7 V156.5 H21.5 Z" fill="#666"/>
  <rect x="30.5" y="144.5" width="1.8" height="4" fill="#666"/>
</svg>

<div id="taskbar"><svg width="1280" height="40" style="position:absolute;left:0;top:0">
<defs>
<linearGradient id="tbg" x1="0" x2="1" y1="0" y2="0">
 <stop offset="0" stop-color="#34595e"/><stop offset="0.12" stop-color="#3a6468"/><stop offset="0.3" stop-color="#37666b"/>
 <stop offset="0.5" stop-color="#3a676b"/><stop offset="0.7" stop-color="#365f63"/><stop offset="0.78" stop-color="#3f7377"/><stop offset="0.9" stop-color="#3d7074"/><stop offset="1" stop-color="#3c6f73"/>
</linearGradient>
<linearGradient id="ieg" x1="0" x2="0" y1="0" y2="1"><stop offset="0" stop-color="#5fd0f5"/><stop offset="1" stop-color="#1a8fd6"/></linearGradient>
<radialGradient id="lolg" cx="0.5" cy="0.5" r="0.5"><stop offset="0" stop-color="#1e6e80"/><stop offset="0.7" stop-color="#0e3f4c"/><stop offset="1" stop-color="#0a2a33"/></radialGradient>
</defs>
<rect x="0" y="0" width="1280" height="40" fill="url(#tbg)"/>
<rect x="0" y="0" width="1280" height="1" fill="rgba(0,0,0,0.25)"/>
<path d="M240,40 Q420,10 640,18 Q820,24 900,40 Z" fill="rgba(0,0,0,0.06)"/>
<path d="M955,1 Q958,14 980,15 Q1005,14 1010,1 Z" fill="rgba(90,70,70,0.25)"/><path d="M1045,1 Q1030,25 1050,30 Q1080,20 1105,1 Z" fill="rgba(30,50,50,0.2)"/>
<defs><linearGradient id="wg" x1="0" x2="1" y1="0" y2="1"><stop offset="0" stop-color="rgba(200,220,255,0.25)"/><stop offset="1" stop-color="rgba(230,240,255,0.45)"/></linearGradient></defs>
<rect x="176.5" y="1.5" width="57" height="37" fill="rgba(255,255,255,0.38)" stroke="rgba(255,255,255,0.7)" stroke-width="1"/>
<rect x="362.5" y="1.5" width="57" height="37" fill="rgba(150,230,230,0.22)" stroke="rgba(220,255,255,0.5)" stroke-width="1"/>
<rect x="424.5" y="1.5" width="57" height="37" fill="url(#wg)" stroke="rgba(220,235,255,0.6)" stroke-width="1"/>
<path d="M11,8.5 L22.3,7 V18.6 H11 Z M23.8,6.8 L37,5 V18.6 H23.8 Z M11,20.2 H22.3 V31.8 L11,30.3 Z M23.8,20.2 H37 V33.8 L23.8,32 Z" fill="#fff"/>
<defs><radialGradient id="ieg2" cx="0.45" cy="0.55" r="0.6"><stop offset="0" stop-color="#b8f4ff"/><stop offset="0.6" stop-color="#5fd0f5"/><stop offset="1" stop-color="#1e7fcf"/></radialGradient></defs>
<circle cx="82" cy="20.2" r="13.2" fill="url(#ieg2)"/>
<path d="M76.2,17.6 Q76.4,12.2 82,12.2 Q87.6,12.2 87.8,17.6 Z" fill="#385e63"/>
<path d="M76.2,21.7 H96 V24.6 H87.5 Q85,27.5 82.3,27.5 Q76.8,27.5 76.2,21.7 Z" fill="#385e63"/>
<path d="M73,31.8 Q66,31 67.5,24 Q71,13 85,6 Q93,2.5 94.8,7 Q95.3,8.5 94.8,10.5" stroke="#f2b600" stroke-width="2.5" fill="none"/>
<path d="M128,7 L145,4 V37 L128,34 Z" fill="#80397b"/>
<rect x="145" y="9" width="12.5" height="24" fill="#fff" stroke="#80397b" stroke-width="1.5"/>
<path d="M147,13 H156 M147,17 H156 M147,21 H156 M147,25 H156 M147,29 H156" stroke="#80397b" stroke-width="1.3"/>
<text x="132.5" y="26" font-family="Liberation Sans" font-weight="bold" font-size="12" fill="#fff">N</text>
<path d="M205,19.5 L192.01,12.00 A15,15 0 0 1 217.99,12.00 Z" fill="#db4437"/>
<path d="M205,19.5 L217.99,12.00 A15,15 0 0 1 205.00,34.50 Z" fill="#f4c20d"/>
<path d="M205,19.5 L205.00,34.50 A15,15 0 0 1 192.01,12.00 Z" fill="#0f9d58"/>
<circle cx="205" cy="19.5" r="6.8" fill="#fff"/><circle cx="205" cy="19.5" r="5.2" fill="#4285f4"/>
<path d="M252,7.5 Q252,6 253.5,6 H266 L267.5,8 H281 Q282.5,8 282.5,9.5 V33 H252 Z" fill="#e6c46c"/>
<rect x="254.5" y="6.8" width="7" height="2.5" fill="#fff"/><rect x="254.8" y="6.8" width="2.5" height="2" fill="#1fb32a"/>
<rect x="263" y="8.5" width="9" height="2.5" fill="#fff"/><rect x="263.3" y="8.5" width="2.5" height="2" fill="#d0312d"/>
<rect x="271" y="10" width="8.5" height="2.5" fill="#fff"/><rect x="271.3" y="10" width="2.5" height="2" fill="#2b8de0"/>
<path d="M252,12.5 H283 V34 H252 Z" fill="#f7df92"/><path d="M253,13.5 H282 V16 H253 Z" fill="#fbeab0"/>
<path d="M255.5,36 V25.5 Q255.5,22.5 258.5,22.5 H275 Q278,22.5 278,25.5 V36 H273 V28.5 H260.5 V36 Z" fill="#9ed8f2" stroke="#3f8fcc" stroke-width="0.9"/>
<defs><linearGradient id="npg" x1="0" x2="1" y1="0" y2="1"><stop offset="0" stop-color="#c8eef8"/><stop offset="0.5" stop-color="#7cc8e0"/><stop offset="1" stop-color="#3a9bbf"/></linearGradient></defs>
<path d="M330,9 L343,8 L343.5,30 L338,33 Z" fill="#d9b45a"/>
<path d="M325,8 L341,9 L341,31 L332,36 L318,30 Z" fill="#f2f2f2"/>
<path d="M325,7.5 L340,8.5 L338,32 L313,28 Z" fill="url(#npg)"/>
<path d="M325.5,6.2 L340.5,7.2" stroke="#8a8a8a" stroke-width="2.2" stroke-dasharray="1 0.8"/>
<circle cx="392" cy="21" r="13" fill="url(#lolg)" stroke="#b8893a" stroke-width="2.2"/>
<path d="M381,5 H391 L389,8 V31 H402 L406,36 H380 L382,32 V9 Z" fill="#c9a050" stroke="#3a2a10" stroke-width="0.8"/>
<path d="M437.5,8 L456,5 V36 L437.5,33 Z" fill="#2b579a"/>
<rect x="455" y="9" width="12.5" height="23" fill="#fff" stroke="#2b579a" stroke-width="1.3"/>
<path d="M457,13 H466 M457,17 H466 M457,21 H466 M457,25 H466 M457,29 H466" stroke="#2b579a" stroke-width="1.4"/>
<text x="439.5" y="25" font-family="Liberation Sans" font-weight="bold" font-size="11.5" fill="#fff">W</text>
<path d="M1068,23.5 L1072.5,19 L1077,23.5 Z" fill="#fff"/>
<rect x="1089" y="13" width="1.5" height="15" fill="#fff"/><path d="M1090.5,13.5 H1097 L1098.5,15.5 H1104 L1102,21 H1096.5 L1095,19.5 H1090.5 Z" fill="#fff"/>
<rect x="1114" y="24.0" width="2" height="2.5" fill="#fff"/>
<rect x="1117" y="22.0" width="2" height="4.5" fill="#fff"/>
<rect x="1120" y="20.0" width="2" height="6.5" fill="#fff"/>
<rect x="1123" y="18.0" width="2" height="8.5" fill="#fff"/>
<rect x="1126" y="16.0" width="2" height="10.5" fill="#fff"/>
<path d="M1137.5,16 H1140.5 L1144,12.5 V27.5 L1140.5,24 H1137.5 Z" fill="#fff"/>
<path d="M1146.5,17 Q1148,20 1146.5,23 M1149,14.5 Q1152,20 1149,25.5" stroke="#fff" stroke-width="1.3" fill="none"/>
<text x="1167" y="25" font-family="Liberation Sans" font-size="11.5" textLength="23" fill="#fff">ENG</text>
<text x="1221.5" y="17.5" font-family="Liberation Sans" font-size="11.5" textLength="26.5" fill="#fff">23:56</text>
<text x="1207.3" y="34" font-family="Liberation Sans" font-size="11.5" textLength="54" fill="#fff">14.11.2019</text>
</svg></div>
</body></html>
